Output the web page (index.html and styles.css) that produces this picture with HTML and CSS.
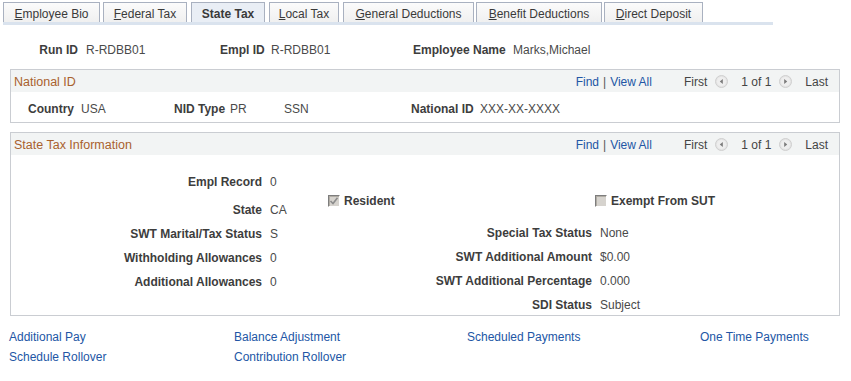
FILE: index.html
```html
<!DOCTYPE html>
<html>
<head>
<meta charset="utf-8">
<link rel="stylesheet" href="styles.css">
</head>
<body>
<div class="tabs">
  <div class="tab t1"><u>E</u>mployee Bio</div>
  <div class="tab t2"><u>F</u>ederal Tax</div>
  <div class="tab t3 active">State Tax</div>
  <div class="tab t4"><u>L</u>ocal Tax</div>
  <div class="tab t5"><u>G</u>eneral Deductions</div>
  <div class="tab t6"><u>B</u>enefit Deductions</div>
  <div class="tab t7"><u>D</u>irect Deposit</div>
</div>
<div class="tabbar"></div>

<div class="keyrow">
  <span class="lbl">Run ID</span><span class="val">R-RDBB01</span>
  <span class="lbl">Empl ID</span><span class="val">R-RDBB01</span>
  <span class="lbl">Employee Name</span><span class="val">Marks,Michael</span>
</div>

<div class="gbox first">
  <div class="ghead">
    <span class="gtitle">National ID</span>
    <div class="gnav">
      <span class="lnk">Find</span><span class="sep">|</span><span class="lnk">View All</span>
      <span class="nav first-l">First</span>
      <svg class="arr" width="13" height="13" viewBox="0 0 13 13"><circle cx="6.5" cy="6.5" r="6" fill="#e4e4e4" stroke="#cfcfcf"/><circle cx="6.5" cy="6.5" r="4.6" fill="#eeeeee"/><path d="M7.8 4 L4.8 6.5 L7.8 9 Z" fill="#7a7a7a"/></svg>
      <span class="nav">1 of 1</span>
      <svg class="arr" width="13" height="13" viewBox="0 0 13 13"><circle cx="6.5" cy="6.5" r="6" fill="#e4e4e4" stroke="#cfcfcf"/><circle cx="6.5" cy="6.5" r="4.6" fill="#eeeeee"/><path d="M5.2 4 L8.2 6.5 L5.2 9 Z" fill="#7a7a7a"/></svg>
      <span class="nav">Last</span>
    </div>
  </div>
  <div class="nidrow">
    <span class="lbl">Country</span><span class="val">USA</span>
    <span class="lbl">NID Type</span><span class="val">PR</span>
    <span class="val">SSN</span>
    <span class="lbl">National ID</span><span class="val">XXX-XX-XXXX</span>
  </div>
</div>

<div class="gbox second">
  <div class="ghead">
    <span class="gtitle">State Tax Information</span>
    <div class="gnav">
      <span class="lnk">Find</span><span class="sep">|</span><span class="lnk">View All</span>
      <span class="nav first-l">First</span>
      <svg class="arr" width="13" height="13" viewBox="0 0 13 13"><circle cx="6.5" cy="6.5" r="6" fill="#e4e4e4" stroke="#cfcfcf"/><circle cx="6.5" cy="6.5" r="4.6" fill="#eeeeee"/><path d="M7.8 4 L4.8 6.5 L7.8 9 Z" fill="#7a7a7a"/></svg>
      <span class="nav">1 of 1</span>
      <svg class="arr" width="13" height="13" viewBox="0 0 13 13"><circle cx="6.5" cy="6.5" r="6" fill="#e4e4e4" stroke="#cfcfcf"/><circle cx="6.5" cy="6.5" r="4.6" fill="#eeeeee"/><path d="M5.2 4 L8.2 6.5 L5.2 9 Z" fill="#7a7a7a"/></svg>
      <span class="nav">Last</span>
    </div>
  </div>
  <div class="stbody">
    <div class="leftcol">
      <span class="lbl">Empl Record</span><span class="val">0</span>
      <span class="lbl">State</span><span class="val">CA</span>
      <span class="lbl">SWT Marital/Tax Status</span><span class="val">S</span>
      <span class="lbl">Withholding Allowances</span><span class="val">0</span>
      <span class="lbl">Additional Allowances</span><span class="val">0</span>
    </div>
    <div class="midcol">
      <span class="chk checked"><svg width="10" height="10" viewBox="0 0 10 10"><path d="M1.5 5 L4 7.5 L8.5 1.8" fill="none" stroke="#8c8c8c" stroke-width="1.6"/></svg></span><span class="chklbl">Resident</span>
    </div>
    <div class="rightcol">
      <span class="empty"></span><span class="chkcell"><span class="chk"></span><span class="chklbl">Exempt From SUT</span></span>
      <span class="lbl">Special Tax Status</span><span class="val">None</span>
      <span class="lbl">SWT Additional Amount</span><span class="val">$0.00</span>
      <span class="lbl">SWT Additional Percentage</span><span class="val">0.000</span>
      <span class="lbl">SDI Status</span><span class="val">Subject</span>
    </div>
  </div>
</div>

<div class="links">
  <span class="lnk">Additional Pay</span>
  <span class="lnk">Balance Adjustment</span>
  <span class="lnk">Scheduled Payments</span>
  <span class="lnk">One Time Payments</span>
  <span class="lnk">Schedule Rollover</span>
  <span class="lnk">Contribution Rollover</span>
</div>
</body>
</html>
```
FILE: styles.css
```css
html, body {
  margin: 0;
  padding: 0;
  background: #ffffff;
}
body {
  font-family: "Liberation Sans", Arial, sans-serif;
  font-size: 12px;
  color: #333333;
  width: 851px;
}
.tabs {
  display: flex;
  padding: 2px 0 0 3px;
  height: 20px;
}
.tab {
  box-sizing: border-box;
  height: 20px;
  line-height: 20px;
  padding-top: 1px;
  border: 1px solid #a9b1c0;
  border-bottom: none;
  background: linear-gradient(#fbfbfb, #f0f0f0);
  color: #3a3a3a;
  white-space: nowrap;
  text-align: center;
}
.t1 { width: 97px; margin-right: 3px; }
.t2 { width: 84px; margin-right: 4px; }
.t3 { width: 74px; margin-right: 4px; }
.t4 { width: 70px; margin-right: 4px; }
.t5 { width: 131px; margin-right: 2px; }
.t6 { width: 126px; margin-right: 2px; }
.t7 { width: 99px; }
.tab u {
  text-decoration: underline;
}
.tab.active {
  background: #e9eef5;
  font-weight: bold;
}
.tabbar {
  margin-left: 3px;
  width: 770px;
  height: 3px;
  background: #dae3ee;
}
.lbl {
  font-weight: bold;
  color: #3d3d3d;
  white-space: nowrap;
}
.val {
  color: #4a4a4a;
  white-space: nowrap;
}
.lnk {
  color: #2256a5;
  white-space: nowrap;
}
.keyrow {
  display: grid;
  grid-template-columns: 78px 142px 43px 150px 92px auto;
  margin-top: 17px;
  line-height: 16px;
}
.keyrow .lbl {
  text-align: right;
}
.keyrow .val {
  padding-left: 8px;
}
.keyrow .val:nth-of-type(1) {
  padding-left: 12px;
}
.gbox {
  margin-left: 10px;
  width: 830px;
  box-sizing: border-box;
  border: 1px solid #cacdd2;
}
.gbox.first {
  margin-top: 11px;
}
.gbox.second {
  margin-top: 9px;
}
.ghead {
  display: flex;
  align-items: center;
  justify-content: space-between;
  box-sizing: border-box;
  height: 22px;
  background: #f2f4f4;
  padding: 2px 11px 0 3px;
}
.gtitle {
  color: #a9612e;
  font-size: 12.5px;
}
.gnav {
  display: flex;
  align-items: center;
}
.sep {
  color: #555;
  margin: 0 4px;
}
.nav {
  color: #444444;
}
.first-l {
  margin-left: 32px;
}
.arr {
  margin: -1px 13px 0 8px;
}
.nidrow {
  display: grid;
  grid-template-columns: 53px 93px 56px 54px 127px 69px auto;
  padding: 9px 0 5px 17px;
  line-height: 16px;
}
.stbody {
  display: flex;
  padding-top: 15px;
  height: 145px;
}
.leftcol {
  display: grid;
  grid-template-columns: 251px 66px;
  grid-template-rows: 28px 24px 24px 24px 24px;
  line-height: 24px;
  align-items: start;
}
.leftcol .lbl,
.rightcol .lbl {
  text-align: right;
}
.leftcol .val,
.rightcol .val {
  padding-left: 8px;
}
.midcol {
  display: flex;
  align-items: center;
  width: 100px;
  height: 24px;
  margin-top: 19px;
}
.chk {
  box-sizing: border-box;
  width: 12px;
  height: 12px;
  background: #d6d3ce;
  border-top: 1px solid #7d7d7d;
  border-left: 1px solid #7d7d7d;
  border-right: 1px solid #ffffff;
  border-bottom: 1px solid #ffffff;
  box-shadow: inset 1px 1px 0 #b0aca4;
  display: inline-flex;
  align-items: center;
  justify-content: center;
  margin-right: 4px;
}
.chklbl {
  font-weight: bold;
  color: #3d3d3d;
}
.rightcol {
  display: grid;
  grid-template-columns: 164px auto;
  grid-template-rows: 32px 24px 24px 24px 24px;
  line-height: 24px;
  align-items: start;
  margin-top: 19px;
}
.chkcell {
  display: flex;
  align-items: center;
  height: 24px;
  margin-left: 3px;
}
.links {
  display: grid;
  grid-template-columns: 225px 233px 233px auto;
  grid-auto-rows: 20px;
  line-height: 20px;
  padding: 11px 0 0 9px;
}
```
